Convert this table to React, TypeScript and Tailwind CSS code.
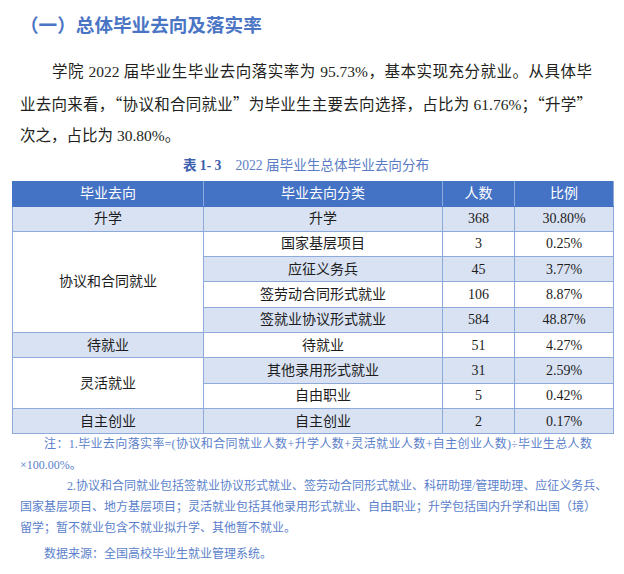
const font = "font-['Liberation_Serif','Noto_Sans_CJK_SC',serif]";

type Row = {
  group?: { name: string; span: number; shaded: boolean };
  kind: string;
  count: string;
  pct: string;
  shaded: boolean;
};

const rows: Row[] = [
  { group: { name: "升学", span: 1, shaded: true }, kind: "升学", count: "368", pct: "30.80%", shaded: true },
  { group: { name: "协议和合同就业", span: 4, shaded: false }, kind: "国家基层项目", count: "3", pct: "0.25%", shaded: false },
  { kind: "应征义务兵", count: "45", pct: "3.77%", shaded: true },
  { kind: "签劳动合同形式就业", count: "106", pct: "8.87%", shaded: false },
  { kind: "签就业协议形式就业", count: "584", pct: "48.87%", shaded: true },
  { group: { name: "待就业", span: 1, shaded: true }, kind: "待就业", count: "51", pct: "4.27%", shaded: false },
  { group: { name: "灵活就业", span: 2, shaded: false }, kind: "其他录用形式就业", count: "31", pct: "2.59%", shaded: true },
  { kind: "自由职业", count: "5", pct: "0.42%", shaded: false },
  { group: { name: "自主创业", span: 1, shaded: true }, kind: "自主创业", count: "2", pct: "0.17%", shaded: true },
];

// one printed line, stretched edge to edge like the justified source
const Line = ({ children, className = "" }: { children: React.ReactNode; className?: string }) => (
  <div className={`whitespace-nowrap text-justify [text-align-last:justify] ${className}`}>{children}</div>
);

// chinese quotes are full width in the source font
const Q = ({ c }: { c: string }) => <span className="font-['Noto_Sans_CJK_SC',sans-serif]">{c}</span>;

const cell = "border border-[#8eaadb] h-[25.3px] p-0 text-center align-middle";

export default function App() {
  return (
    <div className={`w-[624px] h-[574px] bg-white ${font}`}>
      <div className="pl-[20px] pr-[32px]">
        <h2 className="h-[48px] leading-[48px] text-[18.6px] font-bold text-[#4a74c4] font-['Noto_Sans_CJK_SC',sans-serif]">
          （一）总体毕业去向及落实率
        </h2>

        <div className="mt-[8px] text-[15.5px] leading-[31.5px] text-[#231f20]">
          <Line className="pl-[32px]">学院 2022 届毕业生毕业去向落实率为 95.73%，基本实现充分就业。从具体毕</Line>
          <Line>
            业去向来看，<Q c="“" />协议和合同就业<Q c="”" />为毕业生主要去向选择，占比为 61.76%；<Q c="“" />升学<Q c="”" />
          </Line>
          <div>次之，占比为 30.80%。</div>
        </div>

        <div className="mt-[4.5px] h-[20px] leading-[20px] text-center text-[13.6px] text-[#5a7cc4]">
          <span className="font-bold text-[#3d5fae]">表 1- 3</span>
          <span className="ml-[14px]">2022 届毕业生总体毕业去向分布</span>
        </div>
      </div>

      <table className="mt-[4.5px] ml-[12px] w-[601px] table-fixed border-collapse text-[14px] text-[#1c1c1c]">
        <colgroup>
          <col className="w-[191px]" />
          <col className="w-[239px]" />
          <col className="w-[72px]" />
          <col className="w-[99px]" />
        </colgroup>
        <thead>
          <tr className="bg-[#4472c4] text-white">
            {["毕业去向", "毕业去向分类", "人数", "比例"].map((h) => (
              <th key={h} className="h-[25px] p-0 font-normal border border-[#4472c4] border-r-[#8eaadb]">
                {h}
              </th>
            ))}
          </tr>
        </thead>
        <tbody>
          {rows.map((r) => (
            <tr key={r.kind + r.count}>
              {r.group && (
                <td
                  rowSpan={r.group.span}
                  className={`${cell} ${r.group.shaded ? "bg-[#d9e2f3]" : "bg-white"}`}
                >
                  {r.group.name}
                </td>
              )}
              <td className={`${cell} ${r.shaded ? "bg-[#d9e2f3]" : "bg-white"}`}>{r.kind}</td>
              <td className={`${cell} ${r.shaded ? "bg-[#d9e2f3]" : "bg-white"}`}>{r.count}</td>
              <td className={`${cell} ${r.shaded ? "bg-[#d9e2f3]" : "bg-white"}`}>{r.pct}</td>
            </tr>
          ))}
        </tbody>
      </table>

      <div className="pl-[20px] pr-[32px] text-[12px] leading-[21px] text-[#5b7fcb]">
        <Line className="pl-[24px]">注：1.毕业去向落实率=(协议和合同就业人数+升学人数+灵活就业人数+自主创业人数)÷毕业生总人数</Line>
        <div>×100.00%。</div>
        <Line className="pl-[47px]">2.协议和合同就业包括签就业协议形式就业、签劳动合同形式就业、科研助理/管理助理、应征义务兵、</Line>
        <Line>国家基层项目、地方基层项目；灵活就业包括其他录用形式就业、自由职业；升学包括国内升学和出国（境）</Line>
        <div>留学；暂不就业包含不就业拟升学、其他暂不就业。</div>
        <div className="mt-[5px] pl-[24px]">数据来源：全国高校毕业生就业管理系统。</div>
      </div>
    </div>
  );
}
